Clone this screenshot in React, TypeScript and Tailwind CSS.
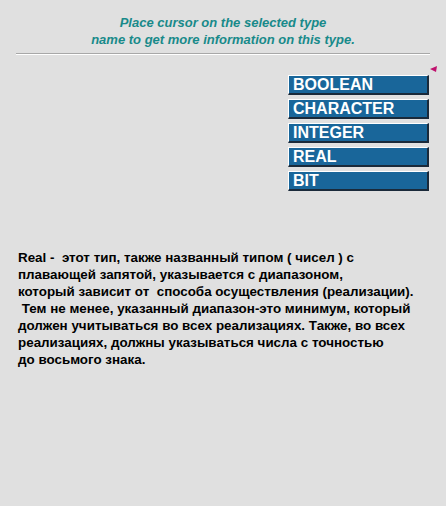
import React from "react";

const types = ["BOOLEAN", "CHARACTER", "INTEGER", "REAL", "BIT"];

const App = () => {
    return (
        <div className="w-[446px] h-[506px] bg-[#e0e0e0] font-['Liberation_Sans',Arial,sans-serif] relative overflow-hidden">
            <div className="pt-[14px] text-center text-[13px] leading-[17px] font-bold italic text-[#188a8a]">
                <p>Place cursor on the selected type</p>
                <p>name to get more information on this type.</p>
            </div>
            <div className="mx-[16px] mt-[5px] h-[2px] border-t border-[#a8a8a8] border-b-white border-b" />
            <div className="flex justify-end pr-[8px] mt-[11px]">
                <svg width="8" height="6" viewBox="0 0 8 6">
                    <path d="M0 3 L7 0 L6 6 Z" fill="#c0126e" />
                </svg>
            </div>
            <div className="flex flex-col gap-[4px] ml-[288px] w-[141px] mt-[3px]">
                {types.map((t) => (
                    <div
                        key={t}
                        className="h-[20px] bg-[#19669a] border-t border-l border-t-white border-l-white border-b-2 border-r-2 border-b-[#1a2a3a] border-r-[#1a2a3a] text-white text-[16px] leading-[17px] font-bold pl-[4px]"
                    >
                        {t}
                    </div>
                ))}
            </div>
            <div className="mt-[58px] pl-[18px] text-[13.4px] leading-[17px] font-bold text-black whitespace-pre">
                <p>Real -  этот тип, также названный типом ( чисел ) с</p>
                <p>плавающей запятой, указывается с диапазоном,</p>
                <p>который зависит от  способа осуществления (реализации).</p>
                <p> Тем не менее, указанный диапазон-это минимум, который</p>
                <p>должен учитываться во всех реализациях. Также, во всех</p>
                <p>реализациях, должны указываться числа с точностью</p>
                <p>до восьмого знака.</p>
            </div>
        </div>
    );
};

export default App;
